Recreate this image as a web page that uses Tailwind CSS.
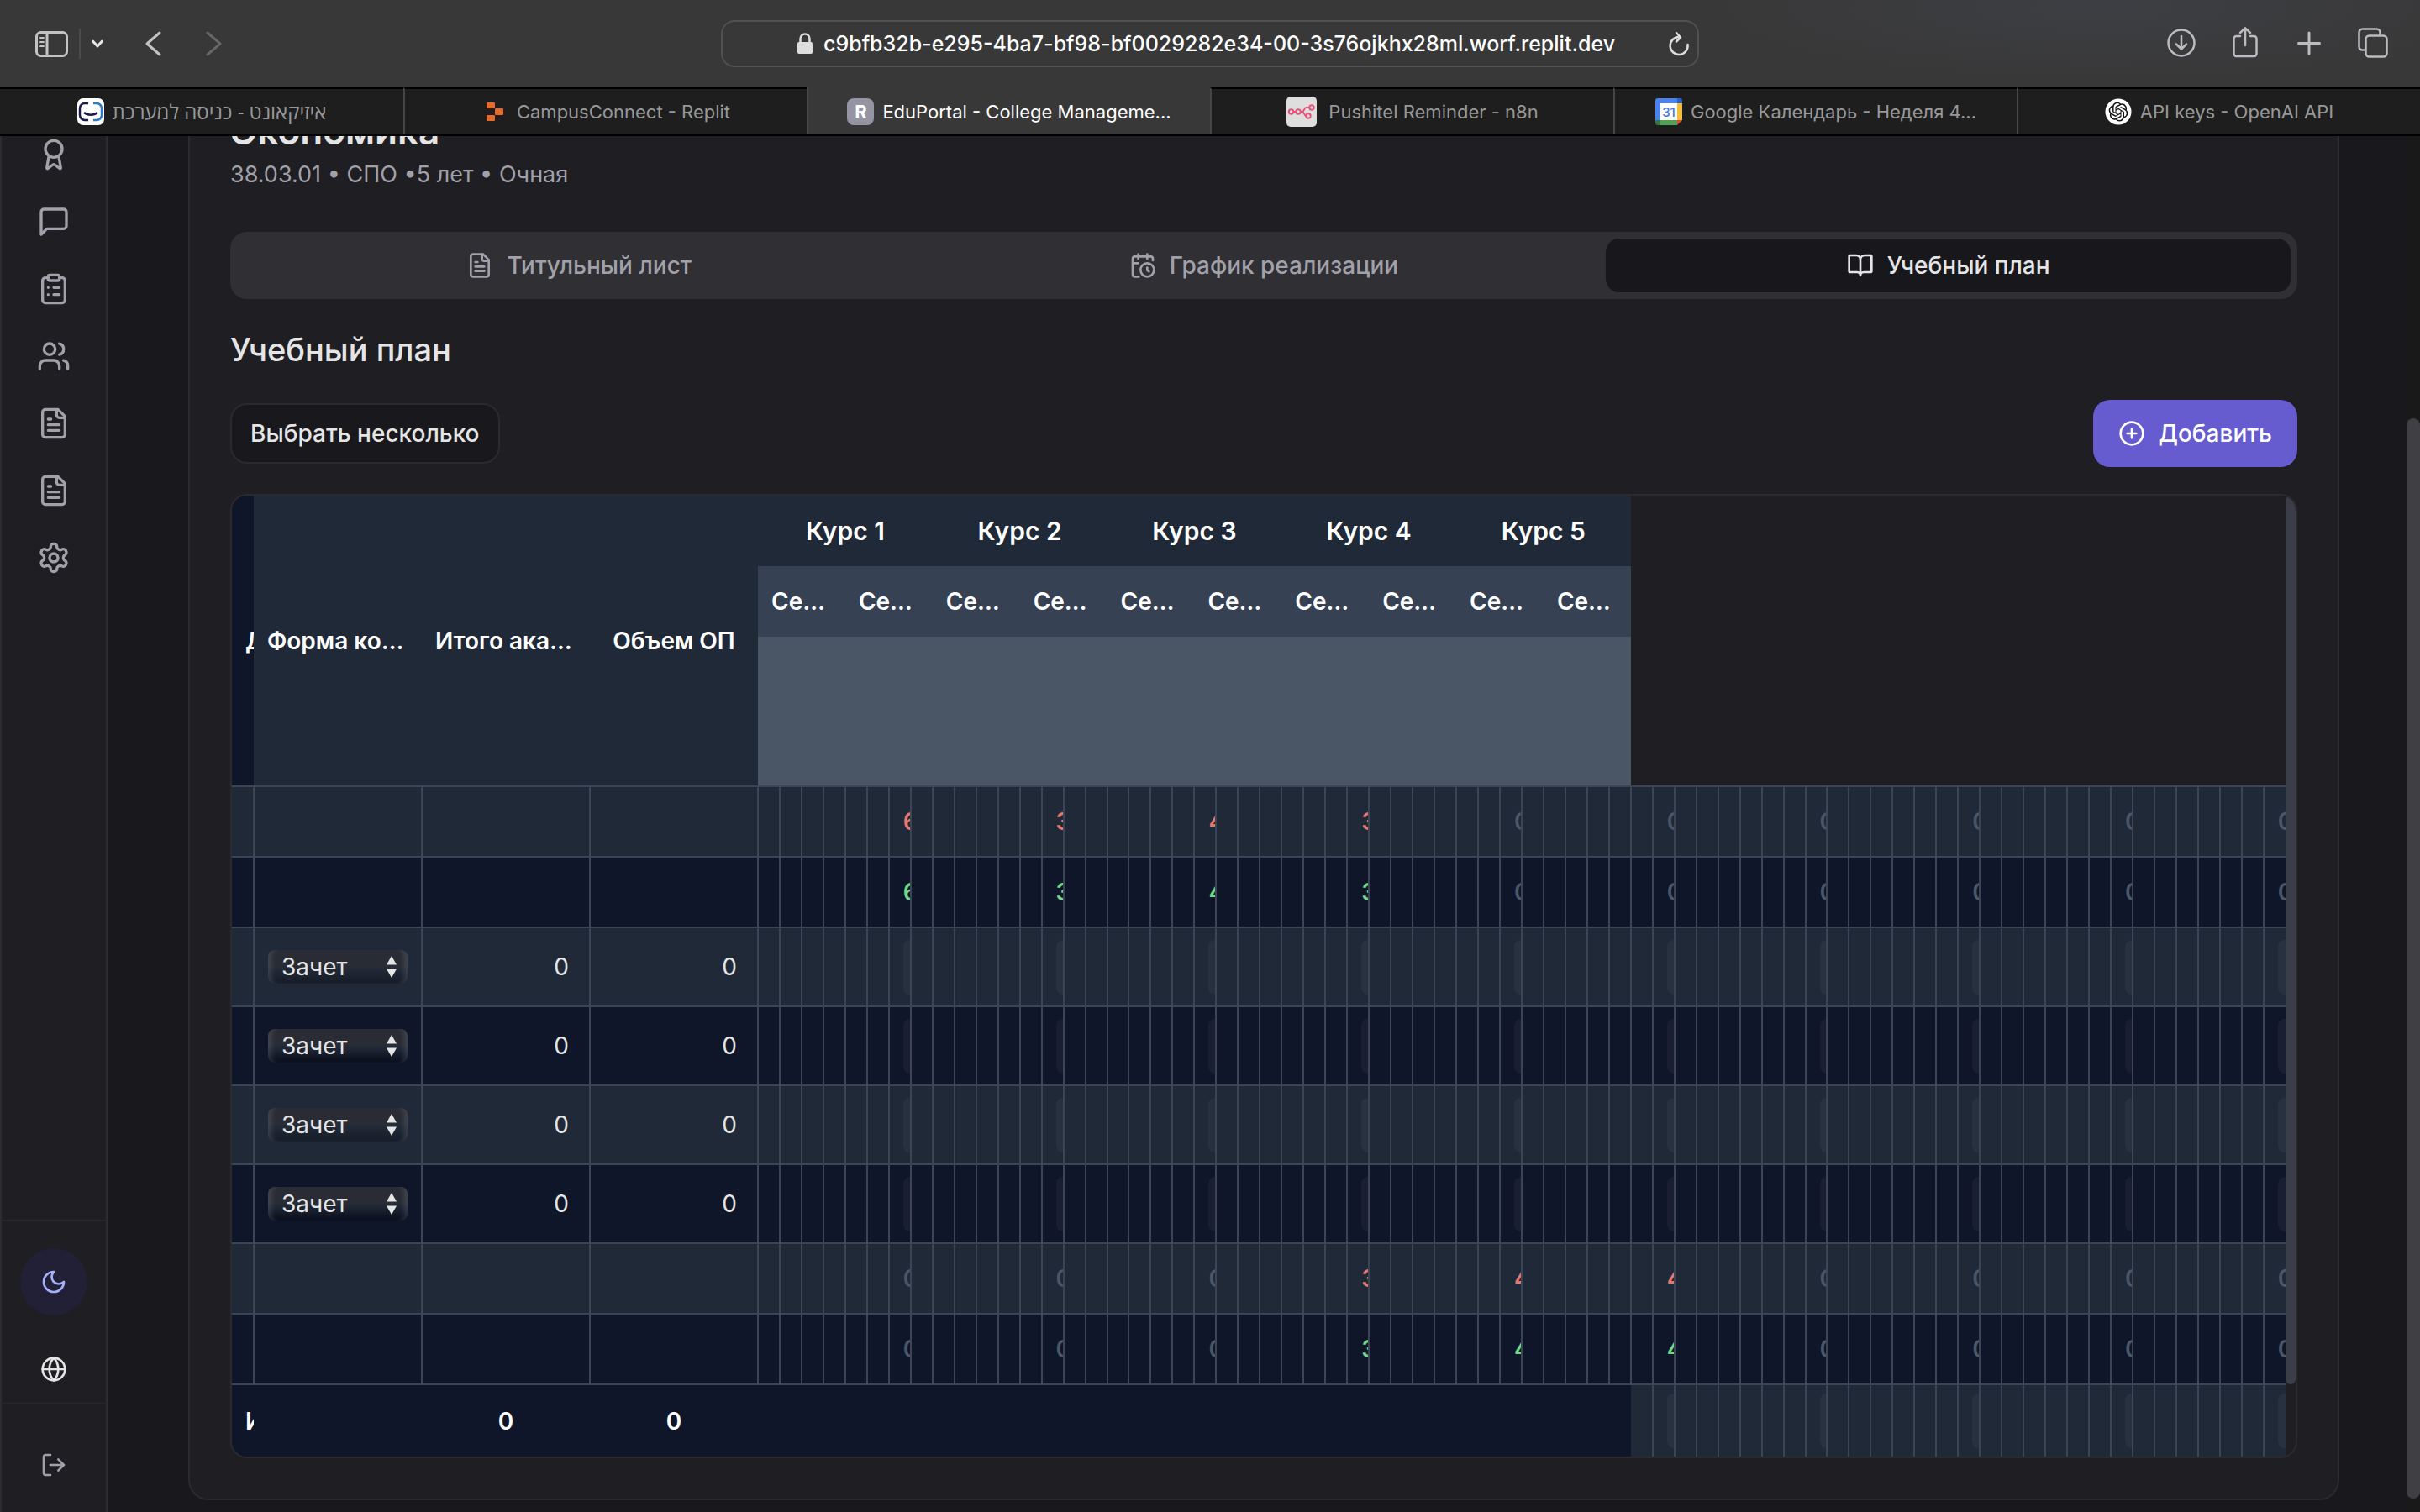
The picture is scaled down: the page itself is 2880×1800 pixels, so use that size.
<!DOCTYPE html>
<html lang="ru">
<head>
<meta charset="utf-8">
<title>EduPortal - College Management</title>
<script src="https://cdn.jsdelivr.net/npm/@tailwindcss/browser@4"></script>
</head>
<body class="flex h-screen flex-col overflow-hidden bg-[#19181c] font-[Inter,'Noto_Sans',sans-serif] text-[28px] leading-10 text-[#e5e5e6]">

<!-- Browser toolbar -->
<header class="shrink-0 bg-[#383838]">
  <div class="grid h-[104px] grid-cols-[1fr_1164px_1fr] items-center bg-[radial-gradient(ellipse_500px_90px_at_2500px_10px,#3d3e43,transparent)]">
    <div class="flex items-center pl-10">
      <button aria-label="Боковая панель" class="text-[#c3c3c3]"><svg class="h-9 w-11" viewBox="0 0 44 36" fill="none" stroke="currentColor" stroke-width="3"><rect x="3.500" y="4.500" width="36" height="28" rx="5"/><path d="M16 5v27"/><path stroke-width="2" stroke-linecap="round" d="M8 11h4M8 16h4M8 21h4"/></svg></button>
      <span class="ml-2.5 h-9 w-0.5 bg-[#4b4b4b]"></span>
      <button aria-label="Группы вкладок" class="ml-3 text-[#e6e6e6]"><svg class="h-4 w-4" viewBox="0 0 16 16" fill="none" stroke="currentColor" stroke-width="3" stroke-linecap="round" stroke-linejoin="round"><path d="M2.500 5 8 11l5.500-6"/></svg></button>
      <button aria-label="Назад" class="ml-11 text-[#c3c3c3]"><svg class="h-8 w-8" viewBox="0 0 32 32" fill="none" stroke="currentColor" stroke-width="3" stroke-linecap="round" stroke-linejoin="round"><path d="M22 3 7 16l15 13"/></svg></button>
      <button aria-label="Вперёд" class="ml-10 text-[#666]"><svg class="h-8 w-8" viewBox="0 0 32 32" fill="none" stroke="currentColor" stroke-width="3" stroke-linecap="round" stroke-linejoin="round"><path d="m7 3 15 13L7 29"/></svg></button>
    </div>
    <div class="flex h-14 items-center rounded-2xl border-2 border-[#515151] pr-1.5 pl-[88px]">
      <svg class="h-7 w-5 shrink-0 text-[#dedede]" viewBox="0 0 20 28" fill="none" stroke="currentColor" stroke-width="2.500"><path d="M4.500 13V8a5.500 5.500 0 0 1 11 0v5"/><rect x="1" y="12" width="18" height="14" rx="2" fill="currentColor" stroke="none"/></svg>
      <input aria-label="Адрес" class="ml-3 min-w-0 flex-1 bg-transparent text-[25px] font-medium text-white outline-none" value="c9bfb32b-e295-4ba7-bf98-bf0029282e34-00-3s76ojkhx28ml.worf.replit.dev">
      <button aria-label="Обновить" class="text-[#dedede]"><svg class="h-8 w-8" viewBox="0 0 32 32" fill="none" stroke="currentColor" stroke-width="2.500" stroke-linecap="round" stroke-linejoin="round"><path d="M26.500 17a10.500 10.500 0 1 1-10-9"/><path d="m13 3 5 5.500-5 5"/></svg></button>
    </div>
    <div class="flex items-center justify-end gap-9 pr-9 text-[#bcbbbf]">
      <button aria-label="Загрузки"><svg class="h-10 w-10" viewBox="0 0 40 40" fill="none" stroke="currentColor" stroke-width="2.500" stroke-linecap="round" stroke-linejoin="round"><circle cx="20" cy="19" r="15.500"/><path d="M20 11v15M14 20.500l6 6 6-6"/></svg></button>
      <button aria-label="Поделиться"><svg class="h-10 w-10" viewBox="0 0 40 40" fill="none" stroke="currentColor" stroke-width="2.500" stroke-linecap="round" stroke-linejoin="round"><path d="M14 11h-4.500a3 3 0 0 0-3 3v18a3 3 0 0 0 3 3h21a3 3 0 0 0 3-3V14a3 3 0 0 0-3-3H26"/><path d="M20 22V1.500M14 7l6-5.700L26 7"/></svg></button>
      <button aria-label="Новая вкладка"><svg class="h-10 w-10" viewBox="0 0 40 40" fill="none" stroke="currentColor" stroke-width="3" stroke-linecap="round"><path d="M20 7v25M7.500 19.500h25"/></svg></button>
      <button aria-label="Обзор вкладок"><svg class="h-10 w-10" viewBox="0 0 40 40" fill="none" stroke="currentColor" stroke-width="2.500" stroke-linejoin="round"><rect x="11.500" y="10.500" width="25" height="25" rx="4"/><path d="M11 27.500H7.500a4 4 0 0 1-4-4v-17a4 4 0 0 1 4-4h17a4 4 0 0 1 4 4v3.500"/></svg></button>
    </div>
  </div>
  <nav class="grid h-[58px] grid-cols-6 border-b-2 border-black text-[22px] text-[#989898]">
    <a href="#" class="flex items-center justify-center gap-2.5 border-t-2 border-t-black bg-[#1e1e1e]">
      <svg class="h-8 w-8" viewBox="0 0 32 32" fill="none" stroke-width="2.500"><rect width="32" height="32" rx="7" fill="#fff"/><path stroke="#1b1b4b" d="M13 6H9a6 6 0 0 0-6 6v8a6 6 0 0 0 6 6h4M8 17c4 3.500 12 3.500 16 0"/><path stroke="#2a7cc4" d="M19 6h4a6 6 0 0 1 6 6v8a6 6 0 0 1-6 6h-4"/></svg>
      <span dir="rtl" class="font-['Open_Sans','DejaVu_Sans',sans-serif] text-2xl">איזיקאונט - כניסה למערכת</span>
    </a>
    <a href="#" class="flex items-center justify-center gap-2.5 border-t-2 border-l-2 border-t-black border-l-[#464646] bg-[#1e1e1e]">
      <svg class="h-8 w-8" viewBox="0 0 32 32" fill="#e56a2c"><rect x="6" y="5" width="10" height="7" rx="1"/><rect x="16" y="12" width="10" height="8" rx="1"/><rect x="6" y="20" width="10" height="7" rx="1"/></svg>
      <span>CampusConnect - Replit</span>
    </a>
    <a href="#" aria-current="page" class="flex items-center justify-center gap-2.5 border-l-2 border-[#464646] pt-0.5 text-white">
      <span class="flex h-8 w-8 items-center justify-center rounded-lg bg-[#9494a3] font-bold">R</span>
      <span>EduPortal - College Manageme...</span>
    </a>
    <a href="#" class="flex items-center justify-center gap-3.5 border-t-2 border-l-2 border-t-black border-l-[#464646] bg-[#1e1e1e]">
      <svg class="h-9 w-9" viewBox="0 0 36 36" fill="none" stroke="#e5557b" stroke-width="2"><rect width="36" height="36" rx="5" fill="#dedede" stroke="none"/><circle cx="5.500" cy="18" r="2.700"/><circle cx="14" cy="18" r="2.700"/><circle cx="30" cy="13" r="2.700"/><circle cx="26" cy="23" r="2.700"/><path d="M8 18h3M17 18h2c2 0 2-5 4.500-5H27M19 18c2 0 2 5 4.500 5"/></svg>
      <span>Pushitel Reminder - n8n</span>
    </a>
    <a href="#" class="flex items-center justify-center gap-2.5 border-t-2 border-l-2 border-t-black border-l-[#464646] bg-[#1e1e1e]">
      <svg class="h-8 w-8" viewBox="0 0 32 32"><path fill="#4c82ee" d="M3 0h23v6H6v20H0V3a3 3 0 0 1 3-3z"/><path fill="#2d61c9" d="M26 0h3a3 3 0 0 1 3 3v3h-6z"/><path fill="#f4be3b" d="M26 6h6v20h-6z"/><path fill="#4fa355" d="M6 26h20v6H6z"/><path fill="#2f7a3c" d="M0 26h6v6H3a3 3 0 0 1-3-3z"/><path fill="#dd4b39" d="M26 26h6l-6 6z"/><path fill="#fff" d="M6 6h20v20H6z"/><text x="16" y="21.500" text-anchor="middle" font-size="15" font-weight="500" fill="#3f78e8">31</text></svg>
      <span>Google Календарь - Неделя 4...</span>
    </a>
    <a href="#" class="flex items-center justify-center gap-2.5 border-t-2 border-l-2 border-t-black border-l-[#464646] bg-[#1e1e1e]">
      <svg class="h-8 w-8" viewBox="0 0 32 32"><circle cx="16" cy="16" r="15.500" fill="#fff"/><path transform="translate(4.600 4.600) scale(.95)" fill="#111" d="M22.2819 9.8211a5.9847 5.9847 0 0 0-.5157-4.9108 6.0462 6.0462 0 0 0-6.5098-2.9A6.0651 6.0651 0 0 0 4.9807 4.1818a5.9847 5.9847 0 0 0-3.9977 2.9 6.0462 6.0462 0 0 0 .7427 7.0966 5.98 5.98 0 0 0 .511 4.9107 6.051 6.051 0 0 0 6.5146 2.9001A5.9847 5.9847 0 0 0 13.2599 24a6.0557 6.0557 0 0 0 5.7718-4.2058 5.9894 5.9894 0 0 0 3.9977-2.9001 6.0557 6.0557 0 0 0-.7475-7.0729zm-9.022 12.6081a4.4755 4.4755 0 0 1-2.8764-1.0408l.1419-.0804 4.7783-2.7582a.7948.7948 0 0 0 .3927-.6813v-6.7369l2.02 1.1686a.071.071 0 0 1 .038.052v5.5826a4.504 4.504 0 0 1-4.4945 4.4944zm-9.6607-4.1254a4.4708 4.4708 0 0 1-.5346-3.0137l.142.0852 4.783 2.7582a.7712.7712 0 0 0 .7806 0l5.8428-3.3685v2.3324a.0804.0804 0 0 1-.0332.0615L9.74 19.9502a4.4992 4.4992 0 0 1-6.1408-1.6464zM2.3408 7.8956a4.485 4.485 0 0 1 2.3655-1.9728V11.6a.7664.7664 0 0 0 .3879.6765l5.8144 3.3543-2.0201 1.1685a.0757.0757 0 0 1-.071 0l-4.8303-2.7865A4.504 4.504 0 0 1 2.3408 7.872zm16.5963 3.8558L13.1038 8.364 15.1192 7.2a.0757.0757 0 0 1 .071 0l4.8303 2.7913a4.4944 4.4944 0 0 1-.6765 8.1042v-5.6772a.79.79 0 0 0-.407-.667zm2.0107-3.0231l-.142-.0852-4.7735-2.7818a.7759.7759 0 0 0-.7854 0L9.409 9.2297V6.8974a.0662.0662 0 0 1 .0284-.0615l4.8303-2.7866a4.4992 4.4992 0 0 1 6.6802 4.66zM8.3065 12.863l-2.02-1.1638a.0804.0804 0 0 1-.038-.0567V6.0742a4.4992 4.4992 0 0 1 7.3757-3.4537l-.142.0805L8.704 5.459a.7948.7948 0 0 0-.3927.6813zm1.0976-2.3654l2.602-1.4998 2.6069 1.4998v2.9994l-2.5974 1.4997-2.6067-1.4997Z"/></svg>
      <span>API keys - OpenAI API</span>
    </a>
  </nav>
</header>

<div class="flex min-h-0 flex-1">
  <!-- App sidebar -->
  <aside class="flex w-32 shrink-0 flex-col overflow-hidden border-x-2 border-[#2d2c31] bg-[#1f1e22] text-[#a1a1aa]">
    <nav class="-mt-[18px] flex flex-col items-center">
      <a href="#" aria-label="Достижения" class="grid h-20 w-20 place-items-center"><svg class="h-10 w-10" viewBox="0 0 24 24" fill="none" stroke="currentColor" stroke-width="2" stroke-linecap="round" stroke-linejoin="round"><path d="m15.477 12.890 1.515 8.526a.5.5 0 0 1-.81.470l-3.580-2.687a1 1 0 0 0-1.197 0l-3.586 2.686a.5.5 0 0 1-.81-.469l1.514-8.526"/><circle cx="12" cy="8" r="6"/></svg></a>
      <a href="#" aria-label="Сообщения" class="grid h-20 w-20 place-items-center"><svg class="h-10 w-10" viewBox="0 0 24 24" fill="none" stroke="currentColor" stroke-width="2" stroke-linecap="round" stroke-linejoin="round"><path d="M21 15a2 2 0 0 1-2 2H7l-4 4V5a2 2 0 0 1 2-2h14a2 2 0 0 1 2 2z"/></svg></a>
      <a href="#" aria-label="Задания" class="grid h-20 w-20 place-items-center"><svg class="h-10 w-10" viewBox="0 0 24 24" fill="none" stroke="currentColor" stroke-width="2" stroke-linecap="round" stroke-linejoin="round"><rect width="8" height="4" x="8" y="2" rx="1" ry="1"/><path d="M16 4h2a2 2 0 0 1 2 2v14a2 2 0 0 1-2 2H6a2 2 0 0 1-2-2V6a2 2 0 0 1 2-2h2M12 11h4M12 16h4M8 11h.01M8 16h.01"/></svg></a>
      <a href="#" aria-label="Пользователи" class="grid h-20 w-20 place-items-center"><svg class="h-10 w-10" viewBox="0 0 24 24" fill="none" stroke="currentColor" stroke-width="2" stroke-linecap="round" stroke-linejoin="round"><path d="M16 21v-2a4 4 0 0 0-4-4H6a4 4 0 0 0-4 4v2"/><circle cx="9" cy="7" r="4"/><path d="M22 21v-2a4 4 0 0 0-3-3.870M16 3.130a4 4 0 0 1 0 7.750"/></svg></a>
      <a href="#" aria-label="Документы" class="grid h-20 w-20 place-items-center"><svg class="h-10 w-10" viewBox="0 0 24 24" fill="none" stroke="currentColor" stroke-width="2" stroke-linecap="round" stroke-linejoin="round"><path d="M15 2H6a2 2 0 0 0-2 2v16a2 2 0 0 0 2 2h12a2 2 0 0 0 2-2V7Z"/><path d="M14 2v4a2 2 0 0 0 2 2h4M10 9H8M16 13H8M16 17H8"/></svg></a>
      <a href="#" aria-label="Учебные планы" class="grid h-20 w-20 place-items-center"><svg class="h-10 w-10" viewBox="0 0 24 24" fill="none" stroke="currentColor" stroke-width="2" stroke-linecap="round" stroke-linejoin="round"><path d="M15 2H6a2 2 0 0 0-2 2v16a2 2 0 0 0 2 2h12a2 2 0 0 0 2-2V7Z"/><path d="M14 2v4a2 2 0 0 0 2 2h4M10 9H8M16 13H8M16 17H8"/></svg></a>
      <a href="#" aria-label="Настройки" class="grid h-20 w-20 place-items-center"><svg class="h-10 w-10" viewBox="0 0 24 24" fill="none" stroke="currentColor" stroke-width="2" stroke-linecap="round" stroke-linejoin="round"><path d="M12.220 2h-.44a2 2 0 0 0-2 2v.18a2 2 0 0 1-1 1.730l-.43.250a2 2 0 0 1-2 0l-.15-.08a2 2 0 0 0-2.730.730l-.22.380a2 2 0 0 0 .73 2.730l.15.100a2 2 0 0 1 1 1.720v.510a2 2 0 0 1-1 1.740l-.15.090a2 2 0 0 0-.73 2.730l.22.380a2 2 0 0 0 2.730.730l.15-.08a2 2 0 0 1 2 0l.43.250a2 2 0 0 1 1 1.730V20a2 2 0 0 0 2 2h.440a2 2 0 0 0 2-2v-.18a2 2 0 0 1 1-1.730l.43-.25a2 2 0 0 1 2 0l.15.080a2 2 0 0 0 2.730-.73l.22-.39a2 2 0 0 0-.73-2.730l-.15-.08a2 2 0 0 1-1-1.740v-.5a2 2 0 0 1 1-1.740l.15-.09a2 2 0 0 0 .73-2.730l-.22-.38a2 2 0 0 0-2.730-.73l-.15.080a2 2 0 0 1-2 0l-.43-.25a2 2 0 0 1-1-1.730V4a2 2 0 0 0-2-2z"/><circle cx="12" cy="12" r="3"/></svg></a>
    </nav>
    <div class="mt-auto flex flex-col items-center border-t-2 border-[#28272c] pt-8">
      <button aria-label="Тёмная тема" class="grid h-20 w-20 place-items-center rounded-full bg-[#212036] text-[#a5b0f8]"><svg class="h-8 w-8" viewBox="0 0 24 24" fill="none" stroke="currentColor" stroke-width="2" stroke-linecap="round" stroke-linejoin="round"><path d="M12 3a6 6 0 0 0 9 9 9 9 0 1 1-9-9Z"/></svg></button>
      <button aria-label="Язык" class="mt-6 grid h-20 w-20 place-items-center text-[#e5e5e6]"><svg class="h-8 w-8" viewBox="0 0 24 24" fill="none" stroke="currentColor" stroke-width="2" stroke-linecap="round" stroke-linejoin="round"><circle cx="12" cy="12" r="10"/><path d="M12 2a14.500 14.500 0 0 0 0 20 14.500 14.500 0 0 0 0-20M2 12h20"/></svg></button>
    </div>
    <div class="flex flex-col items-center border-t-2 border-[#28272c] pt-8 pb-4">
      <button aria-label="Выйти" class="grid h-20 w-20 place-items-center"><svg class="h-8 w-8" viewBox="0 0 24 24" fill="none" stroke="currentColor" stroke-width="2" stroke-linecap="round" stroke-linejoin="round"><path d="M9 21H5a2 2 0 0 1-2-2V5a2 2 0 0 1 2-2h4M16 17l5-5-5-5M21 12H9"/></svg></button>
    </div>
  </aside>

  <main class="min-w-0 flex-1 overflow-hidden pr-20 pl-24">
    <section class="-mt-8 rounded-3xl border-2 border-[#2b2a2f] bg-[#1f1e22] px-12 pb-12">
      <h1 class="text-[44px] leading-[48px] font-semibold">Экономика</h1>
      <p class="mt-2 text-[27px] text-[#a1a1aa]">38.03.01 • СПО •5 лет • Очная</p>

      <div role="tablist" class="mt-12 grid h-20 grid-cols-3 rounded-[20px] bg-[#302f34] p-2 font-medium text-[#a1a1aa]">
        <button role="tab" class="flex items-center justify-center gap-4"><svg class="h-8 w-8" viewBox="0 0 24 24" fill="none" stroke="currentColor" stroke-width="2" stroke-linecap="round" stroke-linejoin="round"><path d="M15 2H6a2 2 0 0 0-2 2v16a2 2 0 0 0 2 2h12a2 2 0 0 0 2-2V7Z"/><path d="M14 2v4a2 2 0 0 0 2 2h4M10 9H8M16 13H8M16 17H8"/></svg>Титульный лист</button>
        <button role="tab" class="flex items-center justify-center gap-4"><svg class="h-8 w-8" viewBox="0 0 24 24" fill="none" stroke="currentColor" stroke-width="2" stroke-linecap="round" stroke-linejoin="round"><path d="M21 7.500V6a2 2 0 0 0-2-2H5a2 2 0 0 0-2 2v14a2 2 0 0 0 2 2h3.500M16 2v4M8 2v4M3 10h5M17.500 17.500 16 16.300V14"/><circle cx="16" cy="16" r="6"/></svg>График реализации</button>
        <button role="tab" aria-selected="true" class="flex items-center justify-center gap-4 rounded-2xl bg-[#18171c] text-[#e5e5e6]"><svg class="h-8 w-8" viewBox="0 0 24 24" fill="none" stroke="currentColor" stroke-width="2" stroke-linecap="round" stroke-linejoin="round"><path d="M12 7v14M3 18a1 1 0 0 1-1-1V4a1 1 0 0 1 1-1h5a4 4 0 0 1 4 4 4 4 0 0 1 4-4h5a1 1 0 0 1 1 1v13a1 1 0 0 1-1 1h-6a3 3 0 0 0-3 3 3 3 0 0 0-3-3z"/></svg>Учебный план</button>
      </div>

      <h2 class="mt-9 text-[38px] leading-[48px] font-medium">Учебный план</h2>
      <div class="mt-9 flex items-center justify-between font-medium">
        <button class="h-[72px] rounded-[20px] border-2 border-[#2b2a2f] bg-[#19181c] px-[22px]">Выбрать несколько</button>
        <button class="flex h-20 items-center gap-4 rounded-[20px] bg-[#675ccf] px-[30px] text-white"><svg class="h-8 w-8" viewBox="0 0 24 24" fill="none" stroke="currentColor" stroke-width="2" stroke-linecap="round" stroke-linejoin="round"><circle cx="12" cy="12" r="10"/><path d="M8 12h8M12 8v8"/></svg>Добавить</button>
      </div>

      <div class="mt-8 flex overflow-hidden rounded-[20px] border-2 border-[#2b2a2f]">
        <div class="min-w-0 flex-1 overflow-hidden">
        <table class="w-full table-fixed border-collapse">
          <colgroup id="cols"><col class="w-[26px]"><col class="w-[200px]"><col class="w-[200px]"><col class="w-[200px]"></colgroup>
          <thead class="text-white">
            <tr class="h-[84px]" id="years">
              <th rowspan="3" class="relative z-10 bg-[#101629] text-left font-semibold whitespace-nowrap shadow-[3px_0_6px_rgba(0,0,0,0.3)]"><div class="overflow-hidden pl-4">Дисциплина</div></th>
              <th rowspan="3" class="truncate bg-[#202938] px-4 font-semibold">Форма контроля</th>
              <th rowspan="3" class="truncate bg-[#202938] px-4 font-semibold">Итого академических часов</th>
              <th rowspan="3" class="truncate bg-[#202938] px-4 font-semibold">Объем ОП</th>
            </tr>
            <tr class="h-[84px]" id="terms"></tr>
            <tr class="h-[178px]"><th colspan="40" class="bg-[#4a5565]"></th></tr>
          </thead>
          <tbody id="rows"></tbody>
          <tfoot>
            <tr class="h-[86px] text-center font-semibold text-white" id="total">
              <td class="overflow-hidden bg-[#101629] pl-4 text-left whitespace-nowrap">Итого</td>
              <td class="bg-[#101629]"></td>
              <td class="bg-[#101629]">0</td>
              <td class="bg-[#101629]">0</td>
              <td colspan="40" class="bg-[#101629]"></td>
            </tr>
          </tfoot>
        </table>
        </div>
        <div class="w-3 shrink-0"><div class="h-[1058px] rounded-md bg-[#3b3e49]"></div></div>
      </div>
    </section>
  </main>
  <div class="w-4 shrink-0 bg-[#1a191a] pt-[336px] pb-4"><div class="h-full rounded-full bg-[#403f43]"></div></div>
</div>

<script>
  const el = id => document.getElementById(id);
  const add = (id, html) => el(id).insertAdjacentHTML('beforeend', html);

  for (let i = 0; i < 70; i++) add('cols', '<col>');
  for (let y = 1; y <= 5; y++) add('years', `<th colspan="8" class="bg-[#202938] text-[30px] font-semibold">Курс ${y}</th>`);
  for (let t = 1; t <= 10; t++) add('terms', `<th colspan="4" class="truncate bg-[#364153] px-4 text-left font-semibold">Семестр ${t}</th>`);

  const hoursInput = '<input aria-label="Часы" class="block h-[65px] w-24 rounded-lg bg-white/4">';
  const tones = { red: 'text-[#e8776f]', green: 'text-[#74d889]', none: 'text-[#4a5768]' };
  const grid = 'border-2 border-[#3b4555] border-l-0 last:border-r-0';

  const sums = [
    { tone: 'red', hours: [6, 3, 4, 3, 0, 0, 0, 0, 0, 0] },
    { tone: 'green', hours: [6, 3, 4, 3, 0, 0, 0, 0, 0, 0] },
    null, null, null, null,
    { tone: 'red', hours: [0, 0, 0, 3, 4, 4, 0, 0, 0, 0] },
    { tone: 'green', hours: [0, 0, 0, 3, 4, 4, 0, 0, 0, 0] },
  ];

  sums.forEach((sum, r) => {
    let html = `<td class="${grid}"></td>`;
    if (sum) {
      html += `<td class="${grid}"></td>`.repeat(3);
    } else {
      html += `<td class="${grid} pl-4">
        <div class="relative w-[166px]">
          <select aria-label="Форма контроля" class="block h-10 w-full appearance-none rounded-lg bg-linear-to-b from-[#292c34] from-50% via-[#242c3a] via-50% to-black/20 pl-4 leading-10 shadow-[inset_10px_0_6px_-6px_rgba(255,255,255,0.12),inset_-10px_0_6px_-6px_rgba(255,255,255,0.12)]"><option>Зачет</option><option>Экзамен</option></select>
          <svg class="pointer-events-none absolute top-1.5 right-3 h-7 w-3.5" viewBox="0 0 14 28" fill="#e5e5e6"><path d="M7 1l6 10.500H1zM7 27l6-10.500H1z"/></svg>
        </div></td>`;
      html += `<td class="${grid} pr-6 text-right">0</td>`.repeat(2);
    }
    for (let c = 0; c < 70; c++) {
      if (c % 7 !== 6) { html += `<td class="${grid}"></td>`; continue; }
      const n = sum && sum.hours[(c - 6) / 7];
      html += sum
        ? `<td class="${grid} overflow-hidden pl-4 font-semibold whitespace-nowrap ${n ? tones[sum.tone] : tones.none}">${n}</td>`
        : `<td class="${grid} overflow-hidden pl-4">${hoursInput}</td>`;
    }
    add('rows', `<tr class="${sum ? 'h-[84px]' : 'h-[94px]'} ${r % 2 ? 'bg-[#101629]' : 'bg-[#202938]'}">${html}</tr>`);
  });

  for (let c = 40; c < 70; c++) {
    add('total', `<td class="overflow-hidden border-r-2 border-[#3b4555] bg-[#202938] pl-4 last:border-r-0">${c % 7 === 6 ? hoursInput : ''}</td>`);
  }
</script>
</body>
</html>
